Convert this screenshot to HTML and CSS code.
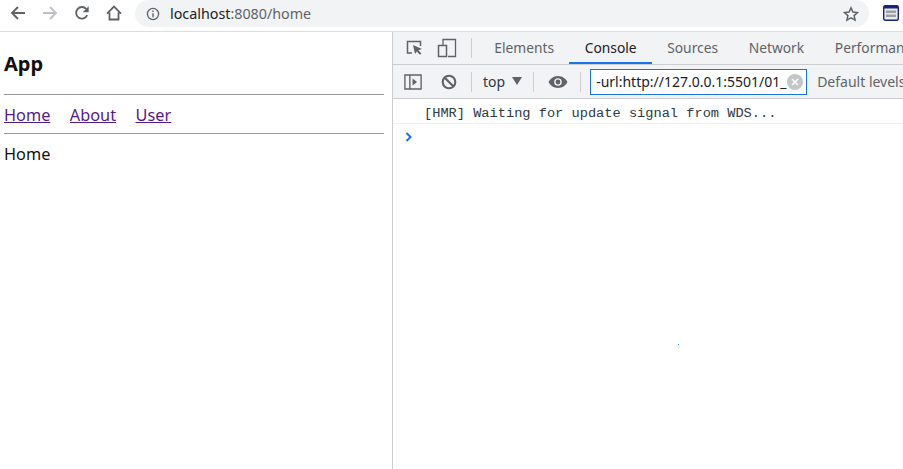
FILE: index.html
```html
<!DOCTYPE html>
<html lang="en">
<head>
<meta charset="utf-8">
<title>App</title>
<link rel="stylesheet" href="styles.css">
</head>
<body>
<div class="browser-bar">
  <div class="nav-icons">
    <svg class="nav-icon" viewBox="0 0 16 16"><path d="M15 8H2.500M8 2L2 8l6 6" fill="none" stroke="#5f6368" stroke-width="1.900"/></svg>
    <svg class="nav-icon" viewBox="0 0 16 16"><path d="M1 8h12.500M8 2l6 6-6 6" fill="none" stroke="#bdc1c6" stroke-width="1.900"/></svg>
    <svg class="nav-icon" viewBox="0 0 16 16"><path d="M13.200 10.200A5.800 5.800 0 1 1 12.300 4" fill="none" stroke="#5f6368" stroke-width="1.900"/><path d="M14.700 1.300v6h-6z" fill="#5f6368"/></svg>
    <svg class="nav-icon" viewBox="0 0 16 16"><path d="M1 8.600L8 1.600l7 7M3.500 7.500v7h9v-7" fill="none" stroke="#5f6368" stroke-width="1.800"/></svg>
  </div>
  <div class="omnibox">
    <svg class="info-icon" viewBox="0 0 14 14"><circle cx="7" cy="7" r="5.600" fill="none" stroke="#5f6368" stroke-width="1.300"/><path d="M7 6.200v4M7 3.600v1.500" stroke="#5f6368" stroke-width="1.400"/></svg>
    <span class="url"><span class="url-host">localhost</span>:8080/home</span>
    <svg class="star-icon" viewBox="0 0 16 16"><path d="M8 1.800l1.900 4.200 4.600.5-3.400 3.100 1 4.500L8 11.800l-4.100 2.300 1-4.500L1.500 6.500l4.600-.5z" fill="none" stroke="#5f6368" stroke-width="1.500"/></svg>
  </div>
  <svg class="ext-icon" viewBox="0 0 16 16"><rect x="0.700" y="0.700" width="14.600" height="14.600" rx="1.500" fill="#e8eaed" stroke="#1a237e" stroke-width="1.400"/><rect x="1" y="1" width="14" height="2.500" fill="#1a237e"/><rect x="3" y="5.500" width="10" height="2.500" fill="#9e9e9e"/><rect x="3" y="9.500" width="10" height="2.500" fill="#9e9e9e"/></svg>
</div>
<main class="workspace">
  <section class="page">
    <h3 class="app-title">App</h3>
    <hr class="rule">
    <nav class="links"><a href="#home">Home</a><a href="#about">About</a><a href="#user">User</a></nav>
    <hr class="rule">
    <p class="content">Home</p>
  </section>
  <section class="devtools">
    <div class="tabs">
      <svg class="dt-icon" viewBox="0 0 20 20"><path d="M7 15H2.500V3.500h13V8" fill="none" stroke="#5f6368" stroke-width="1.500"/><path d="M8 7l9 4-3.600 1.200 3 3.300-1.500 1.300-3-3.300L10 16z" fill="#5f6368"/></svg>
      <svg class="dt-icon device" viewBox="0 0 20 20"><path d="M6 7V1.500h12.500v17H11" fill="none" stroke="#5f6368" stroke-width="1.300"/><rect x="1.500" y="7.500" width="8" height="11" fill="none" stroke="#5f6368" stroke-width="1.500"/></svg>
      <span class="sep tab-sep"></span>
      <span class="tab">Elements</span>
      <span class="tab active">Console</span>
      <span class="tab">Sources</span>
      <span class="tab">Network</span>
      <span class="tab">Performan</span>
    </div>
    <div class="console-bar">
      <svg class="bar-icon play" viewBox="0 0 20 18" preserveAspectRatio="none"><rect x="1" y="2" width="18" height="14" fill="none" stroke="#5f6368" stroke-width="1.500"/><path d="M6.500 2v14" stroke="#5f6368" stroke-width="1.500"/><path d="M9.500 5.500l5 3.500-5 3.500z" fill="#5f6368"/></svg>
      <svg class="bar-icon block" viewBox="0 0 16 16"><circle cx="8" cy="8" r="6.300" fill="none" stroke="#5f6368" stroke-width="2.100"/><path d="M3.500 3.500l9 9" stroke="#5f6368" stroke-width="2.100"/></svg>
      <span class="sep"></span>
      <span class="context">top</span>
      <span class="caret"></span>
      <span class="sep"></span>
      <svg class="bar-icon eye" viewBox="0 0 20 14"><path d="M10 1C5.500 1 2 4 0.500 7 2 10 5.500 13 10 13s8-3 9.500-6C18 4 14.500 1 10 1z" fill="#5f6368"/><circle cx="10" cy="7" r="3.800" fill="#f1f3f4"/><circle cx="10" cy="7" r="2.400" fill="#5f6368"/></svg>
      <span class="sep"></span>
      <div class="filter"><span class="filter-text">-url:http://127.0.0.1:5501/01_</span><svg class="clear" viewBox="0 0 16 16"><circle cx="8" cy="8" r="8" fill="#c4c7ca"/><path d="M5 5l6 6M11 5l-6 6" stroke="#fff" stroke-width="1.500"/></svg></div>
      <span class="levels">Default levels</span>
    </div>
    <div class="message">[HMR] Waiting for update signal from WDS...</div>
    <div class="prompt"><svg class="chevron" viewBox="0 0 8 10"><path d="M1.500 1l4 4-4 4" fill="none" stroke="#1a73e8" stroke-width="2"/></svg></div>
    <span class="speck"></span>
  </section>
</main>
</body>
</html>
```
FILE: styles.css
```css
* { box-sizing: border-box; }
html, body { height: 100%; }
body {
  margin: 0;
  width: 903px;
  height: 469px;
  overflow: hidden;
  background: #fff;
  font-family: "Noto Sans", "Open Sans", sans-serif;
  display: flex;
  flex-direction: column;
}
.browser-bar {
  height: 32px;
  flex: none;
  display: flex;
  align-items: flex-start;
  border-bottom: 1px solid #dadce0;
  padding-right: 4px;
}
.nav-icons {
  display: flex;
  gap: 16px;
  padding: 5px 0 0 10px;
  width: 136px;
}
.nav-icon { width: 16px; height: 16px; flex: none; }
.omnibox {
  flex: none;
  width: 734px;
  height: 27px;
  background: #f1f3f4;
  border-radius: 14px;
  display: flex;
  align-items: center;
  padding: 0 10px 0 11px;
}
.info-icon { width: 14px; height: 14px; flex: none; margin-right: 10px; }
.url { font-size: 14.300px; color: #5f6368; flex: 1; }
.url-host { color: #202124; }
.star-icon { width: 16px; height: 16px; flex: none; }
.ext-icon { width: 16px; height: 16px; flex: none; margin: 5px 0 0 14px; }
.workspace { flex: 1; display: flex; min-height: 0; }
.page {
  width: 393px;
  flex: none;
  border-right: 1px solid #cbcdd1;
  padding: 0 8px 0 4px;
  color: #111;
}
.app-title { margin: 18px 0 0; font-size: 20px; line-height: 28px; font-weight: 700; }
.rule { margin: 0; border: 0; height: 1px; background: #999; }
.page .rule:first-of-type { margin-top: 16px; }
.links { display: flex; gap: 19.500px; height: 38px; padding-top: 2px; align-items: center; font-size: 16.300px; }
.links a { color: #551a8b; }
.content { margin: 9px 0 0; font-size: 16.300px; line-height: 22px; }
.devtools { flex: 1; min-width: 0; position: relative; overflow: hidden; }
.tabs {
  height: 33px;
  display: flex;
  align-items: center;
  background: #f1f3f4;
  border-bottom: 1px solid #cbcdd1;
  padding-left: 12px;
  white-space: nowrap;
  font-size: 13.800px;
  color: #5f6368;
}
.dt-icon { width: 20px; height: 20px; flex: none; }
.device { margin-left: 12px; }
.sep { width: 1px; height: 20px; background: #cbcdd1; flex: none; }
.tab-sep { margin: 0 7px 0 14px; }
.tab { height: 32px; line-height: 32px; padding: 0 15.300px; flex: none; }
.tab.active { color: #202124; border-bottom: 2px solid #1a73e8; }
.console-bar {
  height: 34px;
  display: flex;
  align-items: center;
  background: #f1f3f4;
  border-bottom: 1px solid #cbcdd1;
  padding-left: 11px;
  white-space: nowrap;
  font-size: 14px;
  color: #5f6368;
}
.bar-icon { flex: none; }
.play { width: 18px; height: 18px; }
.block { width: 16px; height: 16px; margin: 0 14px 0 19px; }
.context { color: #303942; margin-left: 11px; }
.caret {
  width: 0; height: 0; margin: 0 11px 2px 7px;
  border-left: 5px solid transparent;
  border-right: 5px solid transparent;
  border-top: 8px solid #5f6368;
}
.eye { width: 20px; height: 14px; margin: 0 12px 0 14px; }
.filter {
  margin-left: 9px;
  width: 217px;
  height: 26px;
  flex: none;
  border: 1px solid #1a73e8;
  background: #fff;
  color: #202124;
  display: flex;
  align-items: center;
  padding: 0 3px 0 5px;
  overflow: hidden;
}
.filter-text { flex: 1; overflow: hidden; }
.clear { width: 16px; height: 16px; flex: none; }
.levels { margin-left: 10px; }
.message {
  height: 25px;
  border-bottom: 1px solid #f0f0f0;
  padding: 6px 0 0 31px;
  font-family: "Liberation Mono", monospace;
  font-size: 13.670px;
  line-height: 18px;
  color: #303942;
  white-space: nowrap;
}
.prompt { height: 24px; padding: 8px 0 0 12px; }
.chevron { display: block; width: 8px; height: 10px; }
.speck { position: absolute; left: 285px; top: 312px; width: 1px; height: 1px; background: #1a9be8; }
```
